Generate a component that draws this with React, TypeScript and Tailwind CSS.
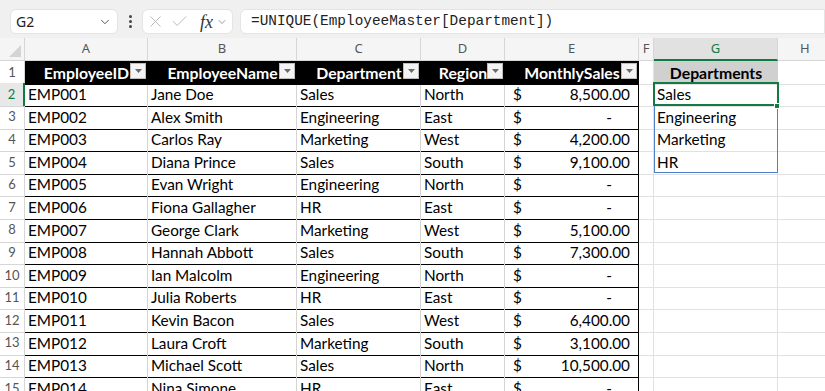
import { Check, ChevronDown, X } from "lucide-react";

interface Employee {
  id: string;
  name: string;
  dept: string;
  region: string;
  sales: string;
}

const employees: Employee[] = [
  { id: "EMP001", name: "Jane Doe", dept: "Sales", region: "North", sales: "8,500.00" },
  { id: "EMP002", name: "Alex Smith", dept: "Engineering", region: "East", sales: "-" },
  { id: "EMP003", name: "Carlos Ray", dept: "Marketing", region: "West", sales: "4,200.00" },
  { id: "EMP004", name: "Diana Prince", dept: "Sales", region: "South", sales: "9,100.00" },
  { id: "EMP005", name: "Evan Wright", dept: "Engineering", region: "North", sales: "-" },
  { id: "EMP006", name: "Fiona Gallagher", dept: "HR", region: "East", sales: "-" },
  { id: "EMP007", name: "George Clark", dept: "Marketing", region: "West", sales: "5,100.00" },
  { id: "EMP008", name: "Hannah Abbott", dept: "Sales", region: "South", sales: "7,300.00" },
  { id: "EMP009", name: "Ian Malcolm", dept: "Engineering", region: "North", sales: "-" },
  { id: "EMP010", name: "Julia Roberts", dept: "HR", region: "East", sales: "-" },
  { id: "EMP011", name: "Kevin Bacon", dept: "Sales", region: "West", sales: "6,400.00" },
  { id: "EMP012", name: "Laura Croft", dept: "Marketing", region: "South", sales: "3,100.00" },
  { id: "EMP013", name: "Michael Scott", dept: "Sales", region: "North", sales: "10,500.00" },
  { id: "EMP014", name: "Nina Simone", dept: "HR", region: "East", sales: "-" },
];

const departments = ["Sales", "Engineering", "Marketing", "HR"];

const grid =
  "grid grid-cols-[25px_123px_149px_124px_84px_134px_15px_124px_1fr]";

const FilterButton = () => (
  <span className="absolute right-[2px] top-[2px] w-[16px] h-[16px] bg-[#f3f3f3] border border-[#bdbdbd] flex items-center justify-center">
    <svg width="7" height="4" viewBox="0 0 7 4">
      <path d="M0 0h7L3.5 4z" fill="#6b6b6b" />
    </svg>
  </span>
);

const HeaderCell = ({ label }: { label: string }) => (
  <div className="relative bg-black text-white font-bold text-[15.8px] flex items-center justify-center overflow-hidden whitespace-nowrap">
    {label}
    <FilterButton />
  </div>
);

const gridCell = "border-r border-b border-[#e1e1e1]";
const tableCell =
  "border-b border-black border-r border-r-[#d4d4d4] px-[3px] flex items-center whitespace-nowrap overflow-hidden";

const App = () => {
  return (
    <div className="w-[825px] h-[391px] overflow-hidden bg-white font-['Lato',sans-serif] text-[15.3px] text-black">
      {/* formula bar */}
      <div className="h-[38px] bg-[#f0f0f0] flex items-start pt-[9px] pl-[10px] gap-[4px]">
        <div className="w-[108px] h-[25px] bg-white rounded-md border border-[#e4e4e4] flex items-center justify-between px-[5px] font-['Noto_Sans',sans-serif] text-[14px] text-[#222]">
          <span>G2</span>
          <ChevronDown size={14} strokeWidth={1.5} className="text-[#444]" />
        </div>
        <div className="w-[16px] h-[25px] flex flex-col items-center justify-center gap-[2px]">
          <span className="w-[3px] h-[3px] rounded-full bg-[#444]" />
          <span className="w-[3px] h-[3px] rounded-full bg-[#444]" />
          <span className="w-[3px] h-[3px] rounded-full bg-[#444]" />
        </div>
        <div className="w-[91px] h-[25px] bg-white rounded-md border border-[#e4e4e4] flex items-center pl-[3px] gap-[5px]">
          <X size={19} strokeWidth={1.1} className="text-[#b0b0b0]" />
          <Check size={19} strokeWidth={1.1} className="text-[#b0b0b0]" />
          <span className="font-['Liberation_Serif',serif] italic text-[18px] text-[#333] leading-none ml-[6px]">
            fx
          </span>
          <ChevronDown size={12} strokeWidth={1.5} className="text-[#777] -ml-[2px]" />
        </div>
        <div className="flex-1 ml-[3px] h-[25px] bg-white rounded-l-md border border-[#e4e4e4] flex items-center pl-[10px] font-['Liberation_Mono',monospace] text-[14.4px] text-[#222]">
          =UNIQUE(EmployeeMaster[Department])
        </div>
      </div>

      {/* sheet */}
      <div className="relative">
        {/* column headers */}
        <div className={`${grid} h-[22.5px] bg-[#f5f5f5] text-[#555] font-['Noto_Sans',sans-serif] text-[13px]`}>
          <div className="border-r border-b border-[#d6d6d6] flex items-end justify-end pr-[3px] pb-[3px]">
            <svg width="12" height="12" viewBox="0 0 12 12">
              <path d="M12 0v12H0z" fill="#d4d4d4" />
            </svg>
          </div>
          {["A", "B", "C", "D", "E", "F"].map((c) => (
            <div
              key={c}
              className="border-r border-b border-[#d6d6d6] flex items-center justify-center"
            >
              {c}
            </div>
          ))}
          <div className="bg-[#e1e1e1] text-[#107c41] border-r border-[#d6d6d6] border-b-2 border-b-[#107c41] flex items-center justify-center">
            G
          </div>
          <div className="border-b border-[#d6d6d6] flex items-center justify-start pl-[22px]">
            H
          </div>
        </div>

        {/* row 1 */}
        <div className={`${grid} h-[22.6px]`}>
          <div className="border-r border-b border-[#d6d6d6] text-[#555] text-[13px] flex items-center justify-center">
            1
          </div>
          <HeaderCell label="EmployeeID" />
          <HeaderCell label="EmployeeName" />
          <HeaderCell label="Department" />
          <HeaderCell label="Region" />
          <HeaderCell label="MonthlySales" />
          <div className={gridCell} />
          <div className="bg-[#d0d0d0] font-bold text-[15.8px] flex items-center justify-center border-b border-[#e1e1e1]">
            Departments
          </div>
          <div className="border-b border-[#e1e1e1]" />
        </div>

        {/* data rows */}
        {employees.map((e, i) => {
          const rowNum = i + 2;
          const selected = rowNum === 2;
          return (
            <div key={e.id} className={`${grid} h-[22.6px]`}>
              <div
                className={
                  selected
                    ? "bg-[#e8e8e8] text-[#107c41] border-b border-[#d6d6d6] border-r-2 border-r-[#107c41] text-[13px] flex items-center justify-center"
                    : "border-r border-b border-[#d6d6d6] text-[#555] text-[13px] flex items-center justify-center"
                }
              >
                {rowNum}
              </div>
              <div className={tableCell}>{e.id}</div>
              <div className={tableCell}>{e.name}</div>
              <div className={tableCell}>{e.dept}</div>
              <div className={tableCell}>{e.region}</div>
              <div className="border-b border-black border-r-[1.5px] border-r-black flex items-center justify-between pl-[8px] whitespace-nowrap">
                <span>$</span>
                <span className={e.sales === "-" ? "pr-[26px]" : "pr-[8px]"}>
                  {e.sales}
                </span>
              </div>
              <div className={gridCell} />
              <div className={`${gridCell} px-[3px] flex items-center`}>
                {departments[i] ?? ""}
              </div>
              <div className="border-b border-[#e1e1e1]" />
            </div>
          );
        })}

        {/* spill range outline */}
        <div className="absolute left-[654px] top-[45.1px] w-[124px] h-[90.4px] border border-[#4f81c7] pointer-events-none" />
        {/* active cell */}
        <div className="absolute left-[653px] top-[44.1px] w-[126px] h-[23.6px] border-2 border-[#107c41] pointer-events-none" />
        <div className="absolute left-[774px] top-[64.5px] w-[6px] h-[6px] bg-[#107c41] border border-white pointer-events-none" />
      </div>
    </div>
  );
};

export default App;
